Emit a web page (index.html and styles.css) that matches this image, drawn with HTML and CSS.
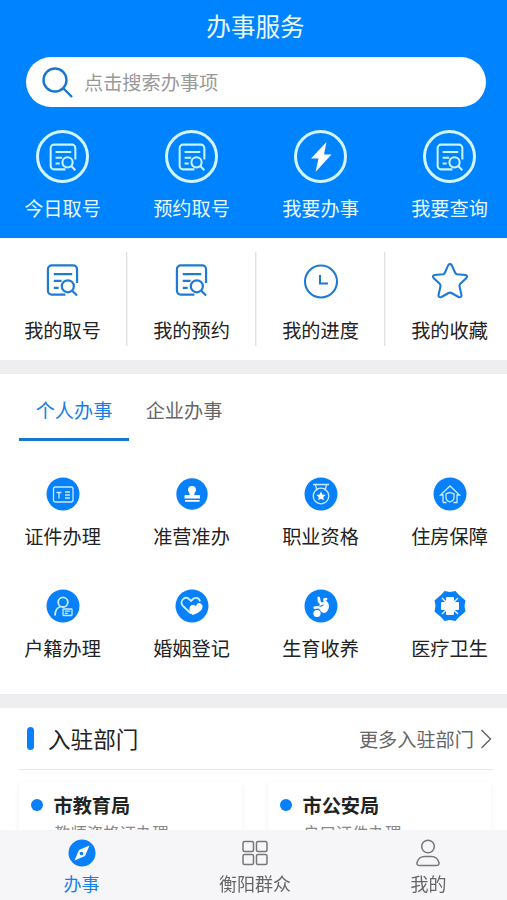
FILE: index.html
```html
<!DOCTYPE html>
<html lang="zh-CN">
<head>
    <meta charset="UTF-8">
    <meta name="viewport" content="width=device-width, initial-scale=1.0">
    <title>办事服务</title>
    <link rel="stylesheet" href="styles.css">
</head>

<body>
  <!-- shared icons -->
  <svg class="symbols" width="0" height="0">
    <symbol id="doc" viewBox="0 0 34 34">
      <path d="M32 20V6a4 4 0 0 0-4-4H6a4 4 0 0 0-4 4v22a4 4 0 0 0 4 4h14M8 11h19M8 18h8M8 25h5"/>
      <circle cx="22.500" cy="23.500" r="6.200"/>
      <path d="M27 28l5 5"/>
    </symbol>
  </svg>

  <header class="header">
    <h1>办事服务</h1>
    <div class="search">
      <svg width="32" height="32" viewBox="0 0 32 32"><circle cx="13" cy="13" r="11.500"/><path d="M21.500 21.500l8.500 8.500"/></svg>
      <span>点击搜索办事项</span>
    </div>
    <nav class="grid top-menu">
      <a class="item"><span class="ring"><svg class="doc" width="28" height="28"><use href="#doc"/></svg></span>今日取号</a>
      <a class="item"><span class="ring"><svg class="doc" width="28" height="28"><use href="#doc"/></svg></span>预约取号</a>
      <a class="item"><span class="ring"><svg width="22" height="30" viewBox="0 0 22 30"><path class="bolt" d="M16.500 0L1 16.500h7.500L5.500 30 21.500 12.500h-7.500z"/></svg></span>我要办事</a>
      <a class="item"><span class="ring"><svg class="doc" width="28" height="28"><use href="#doc"/></svg></span>我要查询</a>
    </nav>
  </header>

  <nav class="grid my-menu">
    <a class="item"><svg class="doc" width="34" height="34"><use href="#doc"/></svg>我的取号</a>
    <a class="item"><svg class="doc" width="34" height="34"><use href="#doc"/></svg>我的预约</a>
    <a class="item"><svg class="line" width="36" height="36" viewBox="0 0 36 36"><circle cx="18" cy="18.500" r="16"/><path d="M17 12v8.500h8"/></svg>我的进度</a>
    <a class="item"><svg class="line star" width="38" height="36" viewBox="0 0 38 36"><path d="M17.200 2.200Q19 0 20.800 2.200L24 9.500Q24.500 10.800 26 11.200L34.500 12Q37.200 12.800 35.200 15.200L29.300 20.800Q28.300 22 28.500 23.300L30.500 32Q30.500 35 27.500 34L20.500 30Q19 29.200 17.500 30L10.500 34Q7.500 35 7.500 32L9.500 23.300Q9.700 22 8.700 20.800L2.800 15.200Q.8 12.800 3.500 12L12 11.200Q13.500 10.800 14 9.500Z"/></svg>我的收藏</a>
  </nav>

  <section class="services">
    <div class="tabs">
      <a class="tab active">个人办事</a>
      <a class="tab">企业办事</a>
    </div>
    <div class="grid service-list">
      <a class="item"><svg width="34" height="34" viewBox="0 0 34 34">
        <circle class="disc" cx="17" cy="17" r="16.500"/>
        <rect class="thin" x="7.500" y="10" width="19.500" height="15" rx="2"/>
        <path class="thin" d="M10.500 15.500h5M13 15v6.500M19 15h5M19 18h5M19 21h5"/>
      </svg>证件办理</a>
      <a class="item"><svg width="34" height="34" viewBox="0 0 34 34">
        <circle class="disc" cx="17" cy="17" r="15.700"/>
        <path class="solid" d="M17 9a4 4 0 0 1 4 4c0 1.800-1.800 2.500-1.800 5H24q1 0 1 1v2.500H9.500V19q0-1 1-1h4.300c0-2.500-1.800-3.200-1.800-5a4 4 0 0 1 4-4zM10 23h14.500v1.800H10z"/>
      </svg>准营准办</a>
      <a class="item"><svg width="34" height="34" viewBox="0 0 34 34">
        <circle class="disc" cx="17" cy="17" r="16.500"/>
        <path class="thin" d="M9 7.500h16M11.500 8l1.500 5.500M22.500 8L21 13.500"/>
        <circle class="thin" cx="17" cy="19" r="7.800"/>
        <path class="solid" d="M17 14.500l1.400 2.900 3.200.5-2.300 2.200.5 3.200-2.800-1.500-2.800 1.500.5-3.200-2.300-2.200 3.200-.5z"/>
      </svg>职业资格</a>
      <a class="item"><svg width="34" height="34" viewBox="0 0 34 34">
        <circle class="disc" cx="17" cy="17" r="16.500"/>
        <path class="thin" d="M10 25.500V18H7.500L17 9l9.500 9H24v7.500h-3.500M10 25.500h3.500M17 15.500l4 1.300v3.700q0 3-4 4.500-4-1.500-4-4.500v-3.700z"/>
      </svg>住房保障</a>
      <a class="item"><svg width="34" height="34" viewBox="0 0 34 34">
        <circle class="disc" cx="17" cy="17" r="16.500"/>
        <circle class="mid" cx="17" cy="13.200" r="4.800"/>
        <path class="mid" d="M9 26.500c0-5 2.500-8 5.500-9"/>
        <rect class="thin" x="17" y="20" width="9" height="6.500" rx=".5"/>
        <path class="thin" d="M18.800 22.200h5.400M18.800 24.400h3"/>
      </svg>户籍办理</a>
      <a class="item"><svg width="34" height="34" viewBox="0 0 34 34">
        <circle class="disc" cx="17" cy="17" r="16.500"/>
        <path class="mid" d="M16 24.500L8 17c-4-4.500 1.500-10.500 6-7l2 2 2-2c3.500-2.500 6.500-.5 7 2.500"/>
        <path class="solid" d="M17.500 26c-3.500-3-4-7.500-1.500-9.500 2-1.500 4-.5 5 1 .5-3 3-4.500 5.300-2.500 3.500 3.500-.3 8.500-8.800 11z"/>
      </svg>婚姻登记</a>
      <a class="item"><svg width="34" height="34" viewBox="0 0 34 34">
        <circle class="disc" cx="17" cy="17" r="16.500"/>
        <circle class="solid" cx="13" cy="24.500" r="3.600"/>
        <path class="solid" d="M13.500 8q1.200-1 2.300.3l1.200 5h2.500l-.3-3.300q1-1.800 3.800-1 .8.500.2 1.700l-1.400.3 2.700 3.500q1.500 5-2 8.500-3 2-5.500-.5l-2.200-3-4.500.5q-1.500-.8-.6-2.500l5.800-.8q1-2-.8-2.700-1.500-1.500-1.200-6z"/>
        <path class="cord" d="M15.500 17.500l4-1.500"/>
      </svg>生育收养</a>
      <a class="item"><svg width="34" height="34" viewBox="0 0 34 34">
        <path class="disc" d="M11.500 2l5.500 1 5.500-1 3.500 4 2.500 2 4 3.500-1 5.500 1 5.500-4 3.500-2.500 2-3.500 4-5.500-1-5.500 1L8 28l-2.500-2-4-3.500 1-5.500-1-5.500L5.500 8 8 6z"/>
        <path class="solid" d="M14 8h6q1 0 1 1v4h4q1 0 1 1v6q0 1-1 1h-4v4q0 1-1 1h-6q-1 0-1-1v-4H9q-1 0-1-1v-6q0-1 1-1h4V9q0-1 1-1z"/>
        <path class="gap" d="M9 9l5 5M25 9l-5 5M9 25l5-5M25 25l-5-5"/>
      </svg>医疗卫生</a>
    </div>
  </section>

  <section class="departments">
    <div class="section-head">
      <h2>入驻部门</h2>
      <a class="more">更多入驻部门<svg width="12" height="20" viewBox="0 0 12 20"><path d="M1.500 1l9 9-9 9"/></svg></a>
    </div>
    <div class="cards">
      <div class="card">
        <h3>市教育局</h3>
        <p>教师资格证办理</p>
      </div>
      <div class="card">
        <h3>市公安局</h3>
        <p>户口证件办理</p>
      </div>
    </div>
  </section>

  <footer class="tabbar">
    <a class="active"><svg width="28" height="28" viewBox="0 0 28 28">
      <circle class="disc" cx="14" cy="14" r="13.500"/>
      <path class="solid" d="M21.500 6.500L17 17 6.500 21.500 11 11z"/>
      <circle class="disc" cx="13.500" cy="14.500" r="1.800"/>
    </svg>办事</a>
    <a><svg width="28" height="28" viewBox="0 0 28 28">
      <rect x="2" y="2.500" width="10.500" height="10" rx="1.500"/>
      <rect x="15.500" y="2.500" width="10.500" height="10" rx="1.500"/>
      <rect x="2" y="15.500" width="10.500" height="10" rx="1.500"/>
      <rect x="15.500" y="15.500" width="10.500" height="10" rx="1.500"/>
    </svg>衡阳群众</a>
    <a><svg width="28" height="28" viewBox="0 0 28 28">
      <circle cx="14" cy="7.500" r="6.300"/>
      <path d="M6 26.500h16c2.500 0 3.500-1.200 3-3-1.200-4-4-6-7.500-6h-7c-3.500 0-6.300 2-7.500 6-.5 1.800.5 3 3 3z"/>
    </svg>我的</a>
  </footer>
</body>
</html>
```

FILE: styles.css
```css
*{
    box-sizing: border-box;
}
body{
    margin: 0;
    height: 100vh;
    overflow: hidden;
    font-family: "Noto Sans CJK SC", sans-serif;
    font-size: 19.2px;
    line-height: 28px;
    color: #222;
    background-color: #fff;
}
h1, h2, h3, p{
    margin: 0;
    font-weight: normal;
}
svg{
    display: block;
    fill: none;
    flex-shrink: 0;
}
.symbols{
    position: absolute;
}
.header{
    height: 238px;
    padding-top: 7px;
    background-color: #0083ff;
    color: #e9fbff;
}
.header h1{
    font-size: 24.6px;
    line-height: 36px;
    text-align: center;
    padding-left: 4px;
}
.search{
    display: flex;
    align-items: center;
    gap: 10px;
    height: 50px;
    margin: 14px 21px 0 26px;
    padding-left: 16px;
    border-radius: 25px;
    background-color: #fff;
    color: #999;
}
.search svg{
    stroke: #1b76d2;
    stroke-width: 2.4;
    margin-top: 2px;
}

/* four equal columns, a little wider than the screen */
.grid{
    display: grid;
    grid-template-columns: repeat(4, 129px);
    margin-left: -2px;
}
.item{
    display: flex;
    flex-direction: column;
    align-items: center;
}
.top-menu{
    padding-top: 23px;
}
.ring{
    display: flex;
    justify-content: center;
    align-items: center;
    width: 53px;
    height: 53px;
    margin-bottom: 11px;
    border: 3px solid #d2f5ff;
    border-radius: 50%;
}
.doc{
    stroke: #1f7ad3;
    stroke-width: 2.3;
}
.ring .doc{
    stroke: #c8f4ff;
    stroke-width: 2.5;
}
.bolt{
    fill: #fff;
}
.my-menu{
    height: 122px;
    padding-top: 14px;
}
.my-menu .item{
    height: 94px;
    padding-top: 11px;
    box-shadow: inset -1px 0 #e2e2e2, 1px 0 #f3f3f3;
}
.my-menu .item:last-child{
    box-shadow: none;
}
.my-menu svg{
    height: 36px;
    margin-bottom: 17px;
}
.my-menu .doc{
    width: 33px;
    height: 34px;
    margin-bottom: 19px;
}
.line{
    stroke: #1f7ad3;
    stroke-width: 2.1;
}

.services{
    height: 348px;
    border-top: 14px solid #eeeef1;
    border-bottom: 14px solid #eeeef1;
}
.tabs{
    display: flex;
    padding-left: 19px;
}
.tab{
    width: 110px;
    height: 67px;
    padding-top: 22px;
    text-align: center;
    color: #666;
}
.tab.active{
    color: #1780e8;
    border-bottom: 3px solid #1677cf;
}
.service-list{
    padding-top: 36px;
    grid-auto-rows: 112px;
}
.service-list svg{
    margin-bottom: 11px;
}
.disc{
    fill: #0880fa;
    stroke: none;
}
.solid{
    fill: #fff;
    stroke: none;
}
.thin{
    stroke: #c4ecff;
    stroke-width: 1.3;
}
.mid{
    stroke: #c4f0ff;
    stroke-width: 1.8;
}
.cord{
    stroke: #0880fa;
    stroke-width: 1.2;
}
.gap{
    stroke: #fff;
    stroke-width: 1.4;
}

.section-head{
    display: flex;
    justify-content: space-between;
    align-items: center;
    height: 62px;
    margin: 0 14px 0 19px;
    padding: 0 0 0 8px;
    border-bottom: 1px solid #e8e8e8;
}
.section-head h2{
    display: flex;
    align-items: center;
    font-size: 22.6px;
}
.section-head h2::before{
    content: "";
    width: 7px;
    height: 23px;
    margin-right: 14px;
    border-radius: 4px;
    background-color: #0880fa;
}
.more{
    display: flex;
    align-items: center;
    gap: 6px;
    margin-right: 1px;
    color: #666;
}
.more svg{
    stroke: #666;
    stroke-width: 1.5;
}
.cards{
    display: flex;
    gap: 26px;
    padding: 12px 16px 0 19px;
}
.card{
    flex: 1;
    height: 90px;
    padding: 9px 0 0 12px;
    box-shadow: 0 2px 6px rgba(0,0,0,0.06);
}
.card h3{
    display: flex;
    align-items: center;
    font-size: 19.2px;
    font-weight: bold;
}
.card h3::before{
    content: "";
    width: 12px;
    height: 12px;
    margin-right: 10.5px;
    border-radius: 50%;
    background-color: #0880fa;
}
.card p{
    padding-left: 23px;
    padding-top: 1px;
    font-size: 16.4px;
    line-height: 24px;
    color: #888;
}

.tabbar{
    position: fixed;
    left: 0;
    bottom: 0;
    display: flex;
    justify-content: center;
    width: 510px;
    height: 70px;
    background-color: #f6f6f8;
}
.tabbar a{
    display: flex;
    flex-direction: column;
    align-items: center;
    flex: 0 0 173.4px;
    padding-top: 9px;
    font-size: 18px;
    color: #666;
}
.tabbar svg{
    margin-bottom: 2px;
    stroke: #777;
    stroke-width: 1.5;
}
.tabbar .active{
    color: #1780e8;
}
```
